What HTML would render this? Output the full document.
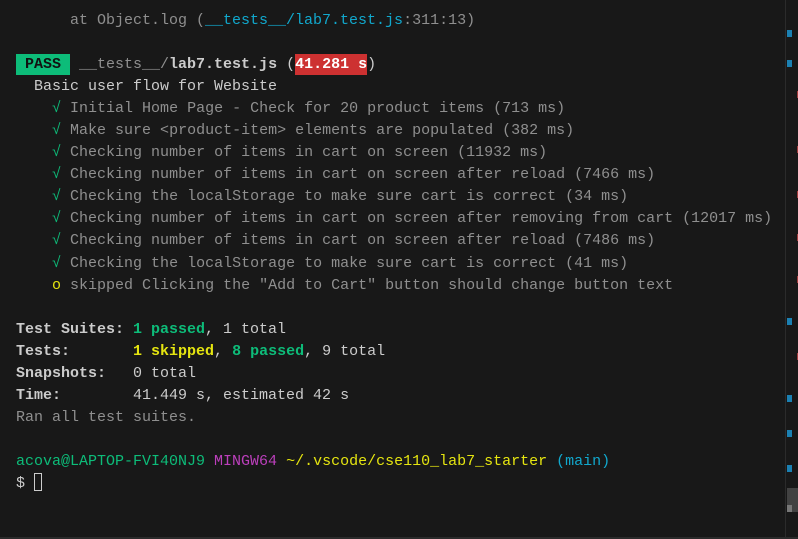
<!DOCTYPE html>
<html><head><meta charset="utf-8"><style>
html,body{margin:0;padding:0;}
body{width:798px;height:539px;background:#181818;overflow:hidden;position:relative;font-family:"Liberation Mono",monospace;font-size:15px;color:#cccccc;}
.t{position:absolute;left:16px;top:10px;white-space:pre;line-height:22.05px;}
.g{color:#8f8f8f}.c{color:#11a8cd}.gr{color:#0dbc79}.y{color:#e5e510}.m{color:#bc3fbc}.b{font-weight:bold}
.pass{background:#0dbc79;color:#111;font-weight:bold;padding:2px 0;}
.red{background:#cd3131;color:#fff;font-weight:bold;padding:2px 0;}
.cur{display:inline-block;width:8px;height:18px;border:1px solid #ccc;vertical-align:-4px;box-sizing:border-box;}
.sb{position:absolute;left:785px;top:0;width:1px;height:537px;background:#2b2b2b;}
.mk{position:absolute;width:5px;height:7px;}
</style></head><body>
<div class="t"><span class="g">      at Object.log (<span class="c">__tests__/lab7.test.js</span>:311:13)</span>

<span class="pass"> PASS </span> <span class="g">__tests__/</span><span class="b">lab7.test.js</span> (<span class="red">41.281 s</span>)
  Basic user flow for Website
    <span class="gr">√</span> <span class="g">Initial Home Page - Check for 20 product items (713 ms)</span>
    <span class="gr">√</span> <span class="g">Make sure &lt;product-item&gt; elements are populated (382 ms)</span>
    <span class="gr">√</span> <span class="g">Checking number of items in cart on screen (11932 ms)</span>
    <span class="gr">√</span> <span class="g">Checking number of items in cart on screen after reload (7466 ms)</span>
    <span class="gr">√</span> <span class="g">Checking the localStorage to make sure cart is correct (34 ms)</span>
    <span class="gr">√</span> <span class="g">Checking number of items in cart on screen after removing from cart (12017 ms)</span>
    <span class="gr">√</span> <span class="g">Checking number of items in cart on screen after reload (7486 ms)</span>
    <span class="gr">√</span> <span class="g">Checking the localStorage to make sure cart is correct (41 ms)</span>
    <span class="y">o</span> <span class="g">skipped Clicking the "Add to Cart" button should change button text</span>

<span class="b">Test Suites: </span><span class="gr b">1 passed</span>, 1 total
<span class="b">Tests:       </span><span class="y b">1 skipped</span>, <span class="gr b">8 passed</span>, 9 total
<span class="b">Snapshots:   </span>0 total
<span class="b">Time:        </span>41.449 s, estimated 42 s
<span class="g">Ran all test suites.</span>

<span class="gr">acova@LAPTOP-FVI40NJ9</span> <span class="m">MINGW64</span> <span class="y">~/.vscode/cse110_lab7_starter</span> <span class="c">(main)</span>
$ <span class="cur"></span></div>
<div class="sb"></div>
<div class="mk" style="left:787px;top:30px;background:#1b80b2"></div>
<div class="mk" style="left:787px;top:60px;background:#1b80b2"></div>
<div class="mk" style="left:787px;top:318px;background:#1b80b2"></div>
<div class="mk" style="left:787px;top:395px;background:#1b80b2"></div>
<div class="mk" style="left:787px;top:430px;background:#1b80b2"></div>
<div class="mk" style="left:787px;top:465px;background:#1b80b2"></div>
<div class="mk" style="left:797px;top:91px;width:2px;background:#a03a3a"></div>
<div class="mk" style="left:797px;top:146px;width:2px;background:#a03a3a"></div>
<div class="mk" style="left:797px;top:191px;width:2px;background:#a03a3a"></div>
<div class="mk" style="left:797px;top:234px;width:2px;background:#a03a3a"></div>
<div class="mk" style="left:797px;top:276px;width:2px;background:#a03a3a"></div>
<div class="mk" style="left:797px;top:353px;width:2px;background:#a03a3a"></div>
<div style="position:absolute;left:787px;top:488px;width:11px;height:24px;background:#424242"></div>
<div style="position:absolute;left:787px;top:505px;width:5px;height:7px;background:#777"></div>
<div style="position:absolute;left:0;top:537px;width:798px;height:2px;background:#2b2b2b"></div>
</body></html>
